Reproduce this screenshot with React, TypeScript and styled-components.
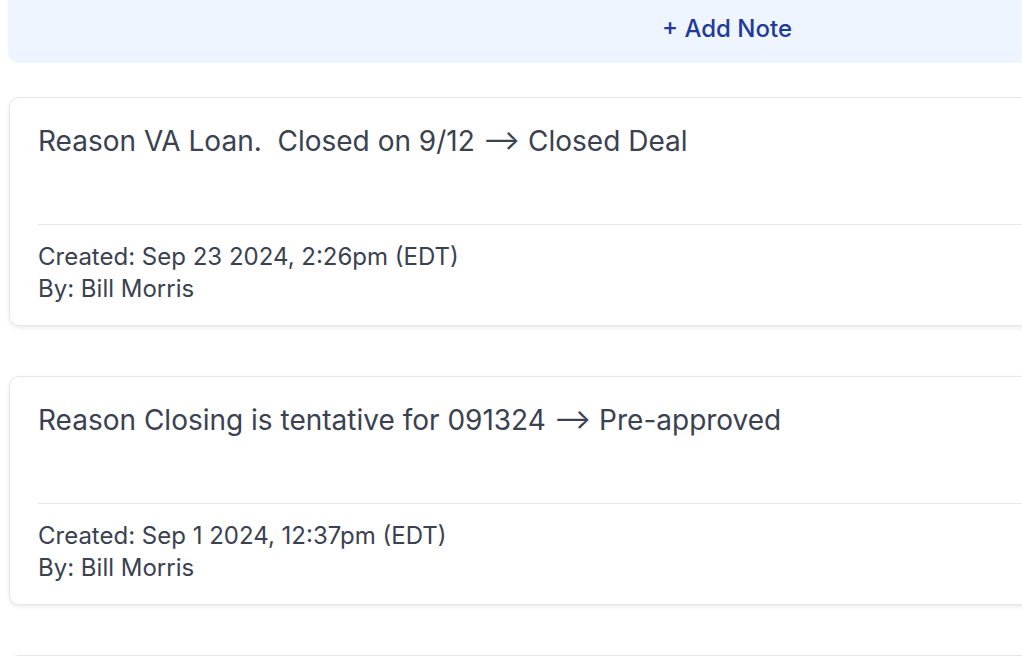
import styled, { createGlobalStyle } from "styled-components";

const GlobalStyle = createGlobalStyle`
  body {
    margin: 0;
    background: #ffffff;
    font-family: Inter, "Noto Sans", sans-serif;
    overflow: hidden;
  }
`;

const Page = styled.div`
  width: 1438px;
  padding-left: 8px;
  display: flex;
  flex-direction: column;
`;

const AddBanner = styled.div`
  height: 63px;
  display: flex;
  align-items: center;
  justify-content: center;
  background: #eff5ff;
  border-radius: 0 0 10px 10px;
`;

const AddButton = styled.button`
  border: none;
  background: none;
  padding: 0;
  margin-top: -7px;
  font-family: Inter, sans-serif;
  font-size: 24px;
  font-weight: 500;
  color: #1e3a9a;
  cursor: pointer;
`;

const NoteList = styled.div`
  display: flex;
  flex-direction: column;
  gap: 50px;
  margin-top: 34px;
  padding-left: 1px;
`;

const Card = styled.div`
  border: 1px solid #e6e7e9;
  border-radius: 10px;
  background: #fff;
  box-shadow: 0 2px 4px rgba(0, 0, 0, 0.08);
  padding: 0 28px;
`;

const Body = styled.div`
  min-height: 100px;
  padding-top: 26px;
  border-bottom: 1px solid #e6e7e9;
`;

const Title = styled.p`
  margin: 0;
  font-size: 28px;
  line-height: 34px;
  color: #3a4150;
  white-space: pre-wrap;
`;

const Meta = styled.div`
  padding: 16px 0 20px;
  font-size: 24px;
  line-height: 32px;
  color: #3a4150;
`;

type Note = { text: string; created: string; by: string };

const notes: Note[] = [
  {
    text: "Reason VA Loan.  Closed on 9/12 \u27f6 Closed Deal",
    created: "Sep 23 2024, 2:26pm (EDT)",
    by: "Bill Morris",
  },
  {
    text: "Reason Closing is tentative for 091324 \u27f6 Pre-approved",
    created: "Sep 1 2024, 12:37pm (EDT)",
    by: "Bill Morris",
  },
  {
    text: "Reason Waiting on appraisal \u27f6 In Progress",
    created: "Aug 20 2024, 9:12am (EDT)",
    by: "Bill Morris",
  },
];

export default function App() {
  return (
    <Page>
      <GlobalStyle />
      <AddBanner>
        <AddButton>+ Add Note</AddButton>
      </AddBanner>
      <NoteList>
        {notes.map((n, i) => (
          <Card key={i}>
            <Body>
              <Title>{n.text}</Title>
            </Body>
            <Meta>
              <div>Created: {n.created}</div>
              <div>By: {n.by}</div>
            </Meta>
          </Card>
        ))}
      </NoteList>
    </Page>
  );
}
